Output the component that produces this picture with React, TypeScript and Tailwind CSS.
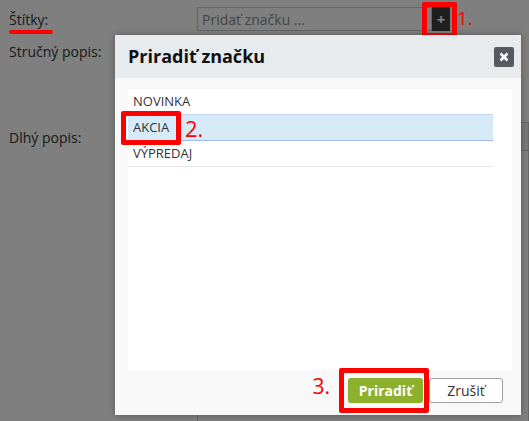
import React from "react";

const tags = ["NOVINKA", "AKCIA", "VÝPREDAJ"];

const App = () => {
  return (
    <div className="relative w-[529px] h-[421px] overflow-hidden bg-white font-['Open_Sans',sans-serif] text-[#333]">
      {/* page under the modal */}
      <div className="grid grid-cols-[188px_1fr] pl-[9px] pt-[7px] text-[14px]">
        <div className="relative flex flex-col pt-[3px]">
          <span className="leading-[20px]">Štítky:</span>
          <span className="relative z-20 mt-[0px] h-[4px] w-[44px] rounded-full bg-[#f00]" />
        </div>
        <div className="flex">
          <div className="flex h-[24px] w-[235px] items-center border border-[#ccc] pl-[4px] text-[#888]">
            Pridať značku ...
          </div>
          <div className="flex h-[24px] w-[18px] items-center justify-center bg-[#3e3e3e] text-[15px] font-bold text-white">
            +
          </div>
        </div>

        <div className="pt-[8px] leading-[20px]">Stručný popis:</div>
        <div className="mt-[4px] h-[72px] w-[320px] border border-[#ccc]" />

        <div className="pt-[18px] leading-[20px]">Dlhý popis:</div>
        <div className="mt-[12px] h-[320px] border border-[#ccc]">
          <div className="h-[28px] border-b border-[#ccc] bg-[#f0f0f0]" />
        </div>
      </div>

      {/* overlay */}
      <div className="absolute inset-0 z-10 bg-black/50" />

      {/* annotation 1 */}
      <div className="absolute left-[422px] top-[2px] z-20 h-[36px] w-[35px] rounded-[2px] border-[5px] border-[#f00]" />
      <span className="absolute left-[457px] top-[6px] z-20 text-[19px] leading-[24px] text-[#f00]">1.</span>

      {/* modal */}
      <div className="absolute left-[115px] top-[35px] z-20 flex h-[380px] w-[406px] flex-col bg-[#f8f8f8] shadow-[0_0_6px_rgba(0,0,0,0.35)]">
        <div className="flex h-[43px] items-center justify-between bg-[#e8ebee] pl-[13px] pr-[7px]">
          <span className="text-[18px] font-bold text-[#111]">Priradiť značku</span>
          <div className="flex h-[20px] w-[20px] items-center justify-center rounded-[2px] bg-[#575b5f]">
            <svg width="10" height="10" viewBox="0 0 10 10">
              <path d="M1.5 1.5 L8.5 8.5 M8.5 1.5 L1.5 8.5" stroke="white" strokeWidth="2.6" />
            </svg>
          </div>
        </div>

        <div className="flex flex-1 flex-col pl-[13px] pr-[9px] pt-[11px]">
          <div className="h-[281px] bg-white pr-[19px]">
            {tags.map((tag, i) => (
              <div
                key={tag}
                className={
                  i === 1
                    ? "relative flex h-[26px] items-center border-b border-[#a3bde9] bg-[#d6ebf7] pl-[5px] text-[13px]"
                    : i === 0
                    ? "flex h-[26px] items-center border-b border-[#c4d6ef] pl-[5px] text-[13px]"
                    : "flex h-[26px] items-center border-b border-[#e6e6e6] pl-[5px] text-[13px]"
                }
              >
                {tag}
                {i === 1 && (
                  <>
                    <span className="absolute left-[-7px] top-[-4px] h-[34px] w-[60px] rounded-[2px] border-[5px] border-[#f00]" />
                    <span className="absolute left-[57px] top-[0px] text-[22px] leading-[26px] text-[#f00]">2.</span>
                  </>
                )}
              </div>
            ))}
          </div>

          <div className="flex items-start justify-end gap-[6px] pr-[9px] pt-[8px]">
            <span className="mr-[12px] mt-[-5px] text-[21px] leading-[26px] text-[#f00]">3.</span>
            <div className="relative">
              <span className="absolute left-[-9px] top-[-10px] h-[45px] w-[90px] rounded-[2px] border-[5px] border-[#f00]" />
              <div className="flex h-[25px] w-[75px] items-center justify-center rounded-[3px] bg-[#8db12c] text-[14px] font-bold text-white">
                Priradiť
              </div>
            </div>
            <div className="flex h-[25px] w-[74px] items-center justify-center rounded-[3px] border border-[#a0a0a0] bg-white text-[14px]">
              Zrušiť
            </div>
          </div>
        </div>
      </div>
    </div>
  );
};

export default App;
